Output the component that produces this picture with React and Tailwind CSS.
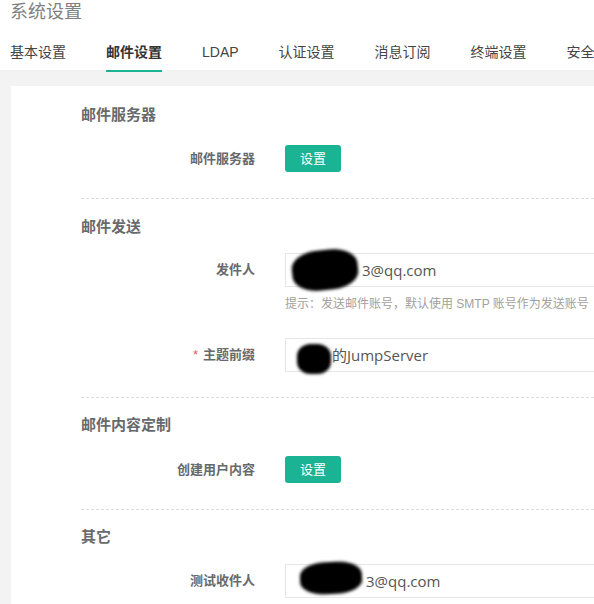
import React from "react";

const font = { fontFamily: '"Liberation Sans", "Noto Sans CJK SC", sans-serif' };

function Blob({ className }) {
  return (
    <span
      className={"pointer-events-none absolute rounded-[40%] bg-black blur-[1.5px] " + className}
    />
  );
}

function Row({ label, required, children, className = "" }) {
  return (
    <div className={"flex items-center " + className}>
      <div className="w-[244px] shrink-0 text-right text-[13px] font-bold leading-[20px] text-[#676a6c]">
        {required && <span className="mr-[5px] font-normal text-[#ed5565]">*</span>}
        {label}
      </div>
      <div className="ml-[30px] min-w-0 flex-1">{children}</div>
    </div>
  );
}

function Btn() {
  return (
    <button className="flex h-[27px] w-[56px] items-center justify-center rounded-[3px] bg-[#1ab394] text-[13px] text-white">
      设置
    </button>
  );
}

function Heading({ children, className = "" }) {
  return (
    <div className={"pl-[70px] text-[15px] font-bold leading-[20px] text-[#676a6c] " + className}>
      {children}
    </div>
  );
}

function Divider({ className = "" }) {
  return <div className={"ml-[70px] border-t border-dashed border-[#dcdcdc] " + className} />;
}

function Input({ children }) {
  return (
    <div
      className="relative flex h-[34px] w-[400px] items-center border border-[#e5e6e7] bg-white pl-[12px] text-[15px] text-[#555]"
      style={{ fontFamily: '"Open Sans", "Noto Sans CJK SC", sans-serif' }}
    >
      {children}
    </div>
  );
}

export default function App() {
  const tabs = ["基本设置", "邮件设置", "LDAP", "认证设置", "消息订阅", "终端设置", "安全设置"];
  return (
    <div className="h-[604px] w-[594px] overflow-hidden bg-white" style={font}>
      <div className="px-[10px] pt-[1px] text-[18px] leading-[22px] text-[#808080]">系统设置</div>
      <div className="relative z-10 mt-[17px] flex h-[30px] gap-[40px] whitespace-nowrap px-[10px] text-[14px] leading-[24px] text-[#444]">
        {tabs.map((t, i) => (
          <div key={t} className={"relative h-full shrink-0 " + (i === 1 ? "font-bold text-[#333]" : "")}>
            {t}
            {i === 1 && <span className="absolute -bottom-[2px] left-0 right-0 h-[2px] bg-[#1ab394]" />}
          </div>
        ))}
      </div>
      <div className="h-full bg-[#f3f3f4] pl-[11px] pt-[16px]">
        <div className="h-full bg-white pt-[19px]">
          <Heading>邮件服务器</Heading>
          <Row label="邮件服务器" className="mt-[20px]">
            <Btn />
          </Row>
          <Divider className="mt-[26px]" />
          <Heading className="mt-[18px]">邮件发送</Heading>
          <Row label="发件人" className="mt-[16px]">
            <Input>
              <span className="pl-[64px]">3@qq.com</span>
              <Blob className="left-[6px] top-[-4px] h-[40px] w-[66px] rotate-[-6deg]" />
            </Input>
          </Row>
          <div className="ml-[274px] mt-[9px] whitespace-nowrap text-[12px] leading-[17px] text-[#a3a09b]">
            提示：发送邮件账号，默认使用 SMTP 账号作为发送账号
          </div>
          <Row label="主题前缀" required className="mt-[25px]">
            <Input>
              <span className="pl-[34px]">的JumpServer</span>
              <Blob className="left-[11px] top-[5px] h-[30px] w-[34px]" />
            </Input>
          </Row>
          <Divider className="mt-[25px]" />
          <Heading className="mt-[17px]">邮件内容定制</Heading>
          <Row label="创建用户内容" className="mt-[21px]">
            <Btn />
          </Row>
          <Divider className="mt-[26px]" />
          <Heading className="mt-[17px]">其它</Heading>
          <Row label="测试收件人" className="mt-[17px]">
            <Input>
              <span className="pl-[68px]">3@qq.com</span>
              <Blob className="left-[14px] top-[-3px] h-[32px] w-[62px] rotate-[-3deg]" />
            </Input>
          </Row>
        </div>
      </div>
    </div>
  );
}
